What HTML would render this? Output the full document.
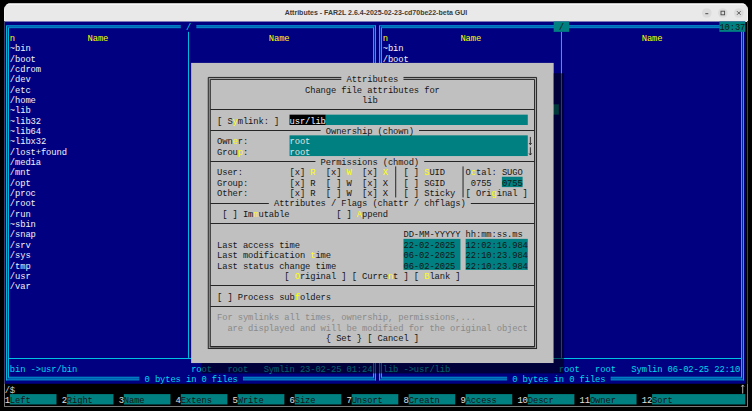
<!DOCTYPE html>
<html><head><meta charset="utf-8"><style>
html,body{margin:0;padding:0;background:#000;width:752px;height:411px;overflow:hidden}
#win{position:absolute;left:4px;top:3px;width:744px;height:404px;background:#000;border-radius:7px 7px 0 0;overflow:hidden}
#title{position:absolute;left:0;top:0;width:744px;height:18px;background:#e9e9e9;border-top:1px solid #c4c4c4;box-shadow:inset 0 1px 0 #f6f6f6,inset 1px 0 0 #f2f2f2,inset -1px 0 0 #f2f2f2,inset 0 -1px 0 #f2f2ea}
#tt{position:absolute;left:0;top:0;width:744px;text-align:center;font:bold 7.6px "Liberation Sans",sans-serif;color:#3c3c3c;line-height:18px;transform:scaleX(0.923);transform-origin:372px 0}
svg{position:absolute;left:0;top:0}
svg text{font-family:"Liberation Mono",monospace;font-size:9.6px;white-space:pre}
</style></head><body>
<div id="win"><div id="title"><div id="tt">Attributes - FAR2L 2.6.4-2025-02-23-cd70be22-beta GUI</div></div></div>
<svg width="752" height="411" viewBox="0 0 752 411">
<rect x="4" y="406" width="744" height="1" fill="#7a7a7a"/>
<rect x="4" y="21" width="1" height="363" fill="#5a5a6a"/>
<rect x="4" y="384" width="1" height="23" fill="#7a7a7a"/>
<rect x="747" y="21" width="1" height="363" fill="#444"/>
<rect x="747" y="384" width="1" height="23" fill="#7a7a7a"/>
<circle cx="706.8" cy="13" r="4.8" fill="#dcdcdc"/>
<circle cx="722.8" cy="13" r="4.8" fill="#dcdcdc"/>
<circle cx="738.8" cy="13" r="4.8" fill="#dcdcdc"/>
<rect x="705.3" y="13.2" width="3" height="1" fill="#4a4a4a"/>
<rect x="721" y="11.2" width="3.6" height="3.6" fill="none" stroke="#4a4a4a" stroke-width="0.9"/>
<path d="M737 11.2 L740.6 14.8 M740.6 11.2 L737 14.8" stroke="#4a4a4a" stroke-width="0.9"/>
<rect x="4.7" y="21.5" width="740.6" height="362.25" fill="#000080"/>
<rect x="6.29" y="25.68" width="369.71" height="2" fill="#0060b0"/>
<rect x="6.29" y="377.22" width="369.71" height="2.7" fill="#0060b0"/>
<rect x="6.29" y="25.68" width="2" height="353.9" fill="#0028a0"/>
<rect x="374" y="25.68" width="2" height="353.9" fill="#0028a0"/>
<rect x="6.29" y="25.18" width="369.71" height="1" fill="#0090cc"/>
<rect x="6.29" y="379.43" width="369.71" height="1" fill="#0090cc"/>
<rect x="6" y="25.68" width="1" height="354.75" fill="#00b4e0"/>
<rect x="375" y="25.68" width="1" height="354.75" fill="#00b4e0"/>
<rect x="8.29" y="27.18" width="365.71" height="1" fill="#0090cc"/>
<rect x="8.29" y="376.72" width="365.71" height="1" fill="#0090cc"/>
<rect x="8" y="27.68" width="1" height="350.05" fill="#00b4e0"/>
<rect x="373" y="27.68" width="1" height="350.05" fill="#00b4e0"/>
<rect x="8.29" y="358" width="365.71" height="1" fill="#00c2e4"/>
<rect x="379.18" y="25.68" width="364.53" height="2" fill="#0060b0"/>
<rect x="379.18" y="377.22" width="364.53" height="2.7" fill="#0060b0"/>
<rect x="379.18" y="25.68" width="2" height="353.9" fill="#0028a0"/>
<rect x="741.71" y="25.68" width="2" height="353.9" fill="#0028a0"/>
<rect x="379.18" y="25.18" width="364.53" height="1" fill="#0090cc"/>
<rect x="379.18" y="379.43" width="364.53" height="1" fill="#0090cc"/>
<rect x="379" y="25.68" width="1" height="354.75" fill="#00b4e0"/>
<rect x="743" y="25.68" width="1" height="354.75" fill="#00b4e0"/>
<rect x="381.18" y="27.18" width="360.53" height="1" fill="#0090cc"/>
<rect x="381.18" y="376.72" width="360.53" height="1" fill="#0090cc"/>
<rect x="381" y="27.68" width="1" height="350.05" fill="#00b4e0"/>
<rect x="741" y="27.68" width="1" height="350.05" fill="#00b4e0"/>
<rect x="381.18" y="358" width="360.53" height="1" fill="#00c2e4"/>
<rect x="188.05" y="31.85" width="1" height="326.02" fill="#00c2e4"/>
<rect x="560.94" y="31.85" width="1" height="326.02" fill="#00c2e4"/>
<rect x="180.79" y="23" width="15.54" height="7.35" fill="#000080"/>
<rect x="553.67" y="21.5" width="15.54" height="10.35" fill="#008080"/>
<rect x="719.4" y="21.5" width="25.9" height="10.35" fill="#008080"/>
<rect x="139.35" y="374.9" width="103.58" height="7.35" fill="#000080"/>
<rect x="507.06" y="374.9" width="103.58" height="7.35" fill="#000080"/>
<rect x="382.77" y="104.3" width="176.09" height="10.35" fill="#008080"/>
<path d="M742.71 393.55 V384.95 M741.41 386.55 L742.71 384.95 L744.01 386.55" stroke="#c8c8c8" stroke-width="0.9" fill="none"/>
<rect x="9.88" y="394.1" width="46.61" height="10.35" fill="#008080"/>
<rect x="66.85" y="394.1" width="46.61" height="10.35" fill="#008080"/>
<rect x="123.82" y="394.1" width="46.61" height="10.35" fill="#008080"/>
<rect x="180.79" y="394.1" width="46.61" height="10.35" fill="#008080"/>
<rect x="237.75" y="394.1" width="46.61" height="10.35" fill="#008080"/>
<rect x="294.72" y="394.1" width="46.61" height="10.35" fill="#008080"/>
<rect x="351.69" y="394.1" width="46.61" height="10.35" fill="#008080"/>
<rect x="408.66" y="394.1" width="46.61" height="10.35" fill="#008080"/>
<rect x="465.63" y="394.1" width="46.61" height="10.35" fill="#008080"/>
<rect x="527.78" y="394.1" width="46.61" height="10.35" fill="#008080"/>
<rect x="589.93" y="394.1" width="46.61" height="10.35" fill="#008080"/>
<rect x="652.08" y="394.1" width="93.22" height="10.35" fill="#008080"/>
<text transform="scale(0.92,1)" x="202.14" y="30.5" fill="#00d8ec">/</text>
<text transform="scale(0.92,1)" x="607.45" y="30.5" fill="#161616">/</text>
<text transform="scale(0.92,1)" x="781.96 787.59 793.22 798.85 804.48" y="30.5" fill="#161616">10:37</text>
<text transform="scale(0.92,1)" x="157.1 168.36 173.99 179.62 185.25 190.88 202.14 207.77 219.02 230.28 235.91 241.54 247.17 252.8" y="382.4" fill="#00d8ec">0bytesin0files</text>
<text transform="scale(0.92,1)" x="556.78 568.04 573.67 579.3 584.93 590.56 601.82 607.45 618.71 629.97 635.6 641.23 646.85 652.48" y="382.4" fill="#00d8ec">0bytesin0files</text>
<text transform="scale(0.92,1)" x="10.74" y="40.85" fill="#ffff00">n</text>
<text transform="scale(0.92,1)" x="416.05" y="40.85" fill="#ffff00">n</text>
<text transform="scale(0.92,1)" x="95.18 100.81 106.44 112.07" y="40.85" fill="#ffff00">Name</text>
<text transform="scale(0.92,1)" x="292.21 297.83 303.46 309.09" y="40.85" fill="#ffff00">Name</text>
<text transform="scale(0.92,1)" x="500.49 506.12 511.75 517.38" y="40.85" fill="#ffff00">Name</text>
<text transform="scale(0.92,1)" x="697.52 703.15 708.78 714.41" y="40.85" fill="#ffff00">Name</text>
<text transform="scale(0.92,1)" x="10.74 16.37 22 27.63" y="51.2" fill="#f2f2fa">~bin</text>
<text transform="scale(0.92,1)" x="10.74 16.37 22 27.63 33.26" y="61.55" fill="#f2f2fa">/boot</text>
<text transform="scale(0.92,1)" x="10.74 16.37 22 27.63 33.26 38.88" y="71.9" fill="#f2f2fa">/cdrom</text>
<text transform="scale(0.92,1)" x="10.74 16.37 22 27.63" y="82.25" fill="#f2f2fa">/dev</text>
<text transform="scale(0.92,1)" x="10.74 16.37 22 27.63" y="92.6" fill="#f2f2fa">/etc</text>
<text transform="scale(0.92,1)" x="10.74 16.37 22 27.63 33.26" y="102.95" fill="#f2f2fa">/home</text>
<text transform="scale(0.92,1)" x="10.74 16.37 22 27.63" y="113.3" fill="#f2f2fa">~lib</text>
<text transform="scale(0.92,1)" x="10.74 16.37 22 27.63 33.26 38.88" y="123.65" fill="#f2f2fa">~lib32</text>
<text transform="scale(0.92,1)" x="10.74 16.37 22 27.63 33.26 38.88" y="134" fill="#f2f2fa">~lib64</text>
<text transform="scale(0.92,1)" x="10.74 16.37 22 27.63 33.26 38.88 44.51" y="144.35" fill="#f2f2fa">~libx32</text>
<text transform="scale(0.92,1)" x="10.74 16.37 22 27.63 33.26 38.88 44.51 50.14 55.77 61.4 67.03" y="154.7" fill="#f2f2fa">/lost+found</text>
<text transform="scale(0.92,1)" x="10.74 16.37 22 27.63 33.26 38.88" y="165.05" fill="#f2f2fa">/media</text>
<text transform="scale(0.92,1)" x="10.74 16.37 22 27.63" y="175.4" fill="#f2f2fa">/mnt</text>
<text transform="scale(0.92,1)" x="10.74 16.37 22 27.63" y="185.75" fill="#f2f2fa">/opt</text>
<text transform="scale(0.92,1)" x="10.74 16.37 22 27.63 33.26" y="196.1" fill="#f2f2fa">/proc</text>
<text transform="scale(0.92,1)" x="10.74 16.37 22 27.63 33.26" y="206.45" fill="#f2f2fa">/root</text>
<text transform="scale(0.92,1)" x="10.74 16.37 22 27.63" y="216.8" fill="#f2f2fa">/run</text>
<text transform="scale(0.92,1)" x="10.74 16.37 22 27.63 33.26" y="227.15" fill="#f2f2fa">~sbin</text>
<text transform="scale(0.92,1)" x="10.74 16.37 22 27.63 33.26" y="237.5" fill="#f2f2fa">/snap</text>
<text transform="scale(0.92,1)" x="10.74 16.37 22 27.63" y="247.85" fill="#f2f2fa">/srv</text>
<text transform="scale(0.92,1)" x="10.74 16.37 22 27.63" y="258.2" fill="#f2f2fa">/sys</text>
<text transform="scale(0.92,1)" x="10.74 16.37 22 27.63" y="268.55" fill="#f2f2fa">/tmp</text>
<text transform="scale(0.92,1)" x="10.74 16.37 22 27.63" y="278.9" fill="#f2f2fa">/usr</text>
<text transform="scale(0.92,1)" x="10.74 16.37 22 27.63" y="289.25" fill="#f2f2fa">/var</text>
<text transform="scale(0.92,1)" x="416.05 421.68 427.31 432.94" y="51.2" fill="#f2f2fa">~bin</text>
<text transform="scale(0.92,1)" x="416.05 421.68 427.31 432.94 438.57" y="61.55" fill="#f2f2fa">/boot</text>
<text transform="scale(0.92,1)" x="10.74 16.37 22 33.26 38.88 44.51 50.14 55.77 61.4 67.03 72.66 78.29" y="372.05" fill="#00d8ec">bin-&gt;usr/bin</text>
<text transform="scale(0.92,1)" x="207.77 213.39 219.02 224.65 247.17 252.8 258.43 264.06 286.58 292.21 297.83 303.46 309.09 314.72 325.98 331.61 337.24 342.87 348.5 354.13 359.76 365.39 376.65 382.27 387.9 393.53 399.16" y="372.05" fill="#00d8ec">rootrootSymlin23-02-2501:24</text>
<text transform="scale(0.92,1)" x="416.05 421.68 427.31 438.57 444.2 449.83 455.46 461.09 466.72 472.34 477.97 483.6" y="372.05" fill="#00d8ec">lib-&gt;usr/lib</text>
<text transform="scale(0.92,1)" x="607.45 613.08 618.71 624.34 646.85 652.48 658.11 663.74 686.26 691.89 697.52 703.15 708.78 714.41 725.67 731.29 736.92 742.55 748.18 753.81 759.44 765.07 776.33 781.96 787.59 793.22 798.85" y="372.05" fill="#00d8ec">rootrootSymlin06-02-2522:10</text>
<text transform="scale(0.92,1)" x="5.11 10.74" y="392.75" fill="#d0d0d0">/$</text>
<text transform="scale(0.92,1)" x="5.11" y="403.1" fill="#e0e0e0">1</text>
<text transform="scale(0.92,1)" x="10.74 16.37 22 27.63" y="403.1" fill="#161616">Left</text>
<text transform="scale(0.92,1)" x="67.03" y="403.1" fill="#e0e0e0">2</text>
<text transform="scale(0.92,1)" x="72.66 78.29 83.92 89.55 95.18" y="403.1" fill="#161616">Right</text>
<text transform="scale(0.92,1)" x="128.95" y="403.1" fill="#e0e0e0">3</text>
<text transform="scale(0.92,1)" x="134.58 140.21 145.84 151.47" y="403.1" fill="#161616">Name</text>
<text transform="scale(0.92,1)" x="190.88" y="403.1" fill="#e0e0e0">4</text>
<text transform="scale(0.92,1)" x="196.51 202.14 207.77 213.39 219.02 224.65" y="403.1" fill="#161616">Extens</text>
<text transform="scale(0.92,1)" x="252.8" y="403.1" fill="#e0e0e0">5</text>
<text transform="scale(0.92,1)" x="258.43 264.06 269.69 275.32 280.95" y="403.1" fill="#161616">Write</text>
<text transform="scale(0.92,1)" x="314.72" y="403.1" fill="#e0e0e0">6</text>
<text transform="scale(0.92,1)" x="320.35 325.98 331.61 337.24" y="403.1" fill="#161616">Size</text>
<text transform="scale(0.92,1)" x="376.65" y="403.1" fill="#e0e0e0">7</text>
<text transform="scale(0.92,1)" x="382.27 387.9 393.53 399.16 404.79 410.42" y="403.1" fill="#161616">Unsort</text>
<text transform="scale(0.92,1)" x="438.57" y="403.1" fill="#e0e0e0">8</text>
<text transform="scale(0.92,1)" x="444.2 449.83 455.46 461.09 466.72 472.34" y="403.1" fill="#161616">Creatn</text>
<text transform="scale(0.92,1)" x="500.49" y="403.1" fill="#e0e0e0">9</text>
<text transform="scale(0.92,1)" x="506.12 511.75 517.38 523.01 528.64 534.27" y="403.1" fill="#161616">Access</text>
<text transform="scale(0.92,1)" x="562.41 568.04" y="403.1" fill="#e0e0e0">10</text>
<text transform="scale(0.92,1)" x="573.67 579.3 584.93 590.56 596.19" y="403.1" fill="#161616">Descr</text>
<text transform="scale(0.92,1)" x="629.97 635.6" y="403.1" fill="#e0e0e0">11</text>
<text transform="scale(0.92,1)" x="641.23 646.85 652.48 658.11 663.74" y="403.1" fill="#161616">Owner</text>
<text transform="scale(0.92,1)" x="697.52 703.15" y="403.1" fill="#e0e0e0">12</text>
<text transform="scale(0.92,1)" x="708.78 714.41 720.04 725.67" y="403.1" fill="#161616">Sort</text>
<rect x="191.14" y="62.9" width="362.53" height="300.15" fill="#c0c0c0"/>
<rect x="208.27" y="77.42" width="328.28" height="2" fill="#a8a8a8"/>
<rect x="208.27" y="346.52" width="328.28" height="2" fill="#707070"/>
<rect x="208.27" y="77.42" width="2" height="271.1" fill="#a0a0a0"/>
<rect x="534.55" y="77.42" width="2" height="271.1" fill="#a8a8a8"/>
<rect x="208.27" y="76.92" width="328.28" height="1" fill="#262626"/>
<rect x="208.27" y="348.02" width="328.28" height="1" fill="#262626"/>
<rect x="207.77" y="77.42" width="1" height="271.6" fill="#262626"/>
<rect x="536.05" y="77.42" width="1" height="271.6" fill="#262626"/>
<rect x="210.27" y="78.92" width="324.28" height="1" fill="#262626"/>
<rect x="210.27" y="346.02" width="324.28" height="1" fill="#262626"/>
<rect x="209.77" y="79.42" width="1" height="267.6" fill="#262626"/>
<rect x="534.05" y="79.42" width="1" height="267.6" fill="#262626"/>
<rect x="210.27" y="109" width="324.28" height="1" fill="#262626"/>
<rect x="210.27" y="130" width="324.28" height="1" fill="#262626"/>
<rect x="210.27" y="161" width="324.28" height="1" fill="#262626"/>
<rect x="210.27" y="203" width="324.28" height="1" fill="#262626"/>
<rect x="210.27" y="223" width="324.28" height="1" fill="#262626"/>
<rect x="210.27" y="285" width="324.28" height="1" fill="#262626"/>
<rect x="210.27" y="306" width="324.28" height="1" fill="#262626"/>
<rect x="395.21" y="166.4" width="1" height="31.05" fill="#262626"/>
<rect x="462.54" y="166.4" width="1" height="31.05" fill="#262626"/>
<rect x="341.33" y="74.75" width="62.15" height="7.35" fill="#c0c0c0"/>
<rect x="320.62" y="126.5" width="98.4" height="7.35" fill="#c0c0c0"/>
<rect x="315.44" y="157.55" width="108.76" height="7.35" fill="#c0c0c0"/>
<rect x="268.83" y="198.95" width="201.98" height="7.35" fill="#c0c0c0"/>
<rect x="289.55" y="114.65" width="36.25" height="10.35" fill="#000000"/>
<rect x="325.8" y="114.65" width="201.98" height="10.35" fill="#008080"/>
<rect x="289.55" y="135.35" width="238.23" height="20.7" fill="#008080"/>
<path d="M530.37 136.95 V144.65 M529.07 143.05 L530.37 144.65 L531.67 143.05" stroke="#202020" stroke-width="0.9" fill="none"/>
<path d="M530.37 147.3 V155 M529.07 153.4 L530.37 155 L531.67 153.4" stroke="#202020" stroke-width="0.9" fill="none"/>
<rect x="501.88" y="176.75" width="20.72" height="10.35" fill="#008080"/>
<rect x="403.48" y="238.85" width="56.97" height="31.05" fill="#008080"/>
<rect x="465.63" y="238.85" width="62.15" height="31.05" fill="#008080"/>
<text transform="scale(0.92,1)" x="376.65 382.27 387.9 393.53 399.16 404.79 410.42 416.05 421.68 427.31" y="82.25" fill="#161616">Attributes</text>
<text transform="scale(0.92,1)" x="354.13 359.76 365.39 371.02 376.65 382.27 387.9 393.53 399.16 410.42 416.05 421.68 427.31 432.94 438.57 444.2" y="134" fill="#161616">Ownership(chown)</text>
<text transform="scale(0.92,1)" x="348.5 354.13 359.76 365.39 371.02 376.65 382.27 387.9 393.53 399.16 404.79 416.05 421.68 427.31 432.94 438.57 444.2 449.83" y="165.05" fill="#161616">Permissions(chmod)</text>
<text transform="scale(0.92,1)" x="297.83 303.46 309.09 314.72 320.35 325.98 331.61 337.24 342.87 348.5 359.76 371.02 376.65 382.27 387.9 393.53 404.79 410.42 416.05 421.68 427.31 432.94 438.57 449.83 461.09 466.72 472.34 477.97 483.6 489.23 494.86 500.49" y="206.45" fill="#161616">Attributes/Flags(chattr/chflags)</text>
<text transform="scale(0.92,1)" x="331.61 337.24 342.87 348.5 354.13 359.76 371.02 376.65 382.27 387.9 399.16 404.79 410.42 416.05 421.68 427.31 432.94 438.57 444.2 449.83 461.09 466.72 472.34" y="92.6" fill="#161616">Changefileattributesfor</text>
<text transform="scale(0.92,1)" x="393.53 399.16 404.79" y="102.95" fill="#161616">lib</text>
<text transform="scale(0.92,1)" x="235.91 247.17" y="123.65" fill="#161616">[S</text>
<text transform="scale(0.92,1)" x="252.8" y="123.65" fill="#ffff00">y</text>
<text transform="scale(0.92,1)" x="258.43 264.06 269.69 275.32 280.95 286.58 297.83" y="123.65" fill="#161616">mlink:]</text>
<text transform="scale(0.92,1)" x="314.72 320.35 325.98 331.61 337.24 342.87 348.5" y="123.65" fill="#f2f2fa">usr/lib</text>
<text transform="scale(0.92,1)" x="235.91 241.54 247.17" y="144.35" fill="#161616">Own</text>
<text transform="scale(0.92,1)" x="252.8" y="144.35" fill="#ffff00">e</text>
<text transform="scale(0.92,1)" x="258.43 264.06" y="144.35" fill="#161616">r:</text>
<text transform="scale(0.92,1)" x="235.91 241.54 247.17 252.8" y="154.7" fill="#161616">Grou</text>
<text transform="scale(0.92,1)" x="258.43" y="154.7" fill="#ffff00">p</text>
<text transform="scale(0.92,1)" x="264.06" y="154.7" fill="#161616">:</text>
<text transform="scale(0.92,1)" x="314.72 320.35 325.98 331.61" y="144.35" fill="#e0e0e0">root</text>
<text transform="scale(0.92,1)" x="314.72 320.35 325.98 331.61" y="154.7" fill="#e0e0e0">root</text>
<text transform="scale(0.92,1)" x="235.91 241.54 247.17 252.8 258.43" y="175.4" fill="#161616">User:</text>
<text transform="scale(0.92,1)" x="235.91 241.54 247.17 252.8 258.43 264.06" y="185.75" fill="#161616">Group:</text>
<text transform="scale(0.92,1)" x="235.91 241.54 247.17 252.8 258.43 264.06" y="196.1" fill="#161616">Other:</text>
<text transform="scale(0.92,1)" x="314.72 320.35 325.98" y="175.4" fill="#161616">[x]</text>
<text transform="scale(0.92,1)" x="337.24" y="175.4" fill="#ffff00">R</text>
<text transform="scale(0.92,1)" x="354.13 359.76 365.39" y="175.4" fill="#161616">[x]</text>
<text transform="scale(0.92,1)" x="376.65" y="175.4" fill="#ffff00">W</text>
<text transform="scale(0.92,1)" x="393.53 399.16 404.79" y="175.4" fill="#161616">[x]</text>
<text transform="scale(0.92,1)" x="416.05" y="175.4" fill="#ffff00">X</text>
<text transform="scale(0.92,1)" x="314.72 320.35 325.98 337.24" y="185.75" fill="#161616">[x]R</text>
<text transform="scale(0.92,1)" x="354.13 365.39 376.65" y="185.75" fill="#161616">[]W</text>
<text transform="scale(0.92,1)" x="393.53 399.16 404.79 416.05" y="185.75" fill="#161616">[x]X</text>
<text transform="scale(0.92,1)" x="314.72 320.35 325.98 337.24" y="196.1" fill="#161616">[x]R</text>
<text transform="scale(0.92,1)" x="354.13 365.39 376.65" y="196.1" fill="#161616">[]W</text>
<text transform="scale(0.92,1)" x="393.53 399.16 404.79 416.05" y="196.1" fill="#161616">[x]X</text>
<text transform="scale(0.92,1)" x="438.57 449.83" y="175.4" fill="#161616">[]</text>
<text transform="scale(0.92,1)" x="461.09" y="175.4" fill="#ffff00">S</text>
<text transform="scale(0.92,1)" x="466.72 472.34 477.97" y="175.4" fill="#161616">UID</text>
<text transform="scale(0.92,1)" x="438.57 449.83 461.09 466.72 472.34 477.97" y="185.75" fill="#161616">[]SGID</text>
<text transform="scale(0.92,1)" x="438.57 449.83 461.09 466.72 472.34 477.97 483.6 489.23" y="196.1" fill="#161616">[]Sticky</text>
<text transform="scale(0.92,1)" x="506.12" y="175.4" fill="#161616">O</text>
<text transform="scale(0.92,1)" x="511.75" y="175.4" fill="#ffff00">c</text>
<text transform="scale(0.92,1)" x="517.38 523.01 528.64 534.27 545.53 551.16 556.78 562.41" y="175.4" fill="#161616">tal:SUGO</text>
<text transform="scale(0.92,1)" x="511.75 517.38 523.01 528.64" y="185.75" fill="#161616">0755</text>
<text transform="scale(0.92,1)" x="545.53 551.16 556.78 562.41" y="185.75" fill="#161616">0755</text>
<text transform="scale(0.92,1)" x="506.12 517.38 523.01 528.64" y="196.1" fill="#161616">[Ori</text>
<text transform="scale(0.92,1)" x="534.27" y="196.1" fill="#ffff00">g</text>
<text transform="scale(0.92,1)" x="539.9 545.53 551.16 556.78 568.04" y="196.1" fill="#161616">inal]</text>
<text transform="scale(0.92,1)" x="241.54 252.8 264.06 269.69" y="216.8" fill="#161616">[]Im</text>
<text transform="scale(0.92,1)" x="275.32" y="216.8" fill="#ffff00">m</text>
<text transform="scale(0.92,1)" x="280.95 286.58 292.21 297.83 303.46 309.09" y="216.8" fill="#161616">utable</text>
<text transform="scale(0.92,1)" x="365.39 376.65" y="216.8" fill="#161616">[]</text>
<text transform="scale(0.92,1)" x="387.9" y="216.8" fill="#ffff00">A</text>
<text transform="scale(0.92,1)" x="393.53 399.16 404.79 410.42 416.05" y="216.8" fill="#161616">ppend</text>
<text transform="scale(0.92,1)" x="438.57 444.2 449.83 455.46 461.09 466.72 472.34 477.97 483.6 489.23 494.86 506.12 511.75 517.38 523.01 528.64 534.27 539.9 545.53 551.16 556.78 562.41" y="237.5" fill="#161616">DD-MM-YYYYYhh:mm:ss.ms</text>
<text transform="scale(0.92,1)" x="235.91 241.54 247.17 252.8 264.06 269.69 275.32 280.95 286.58 292.21 303.46 309.09 314.72 320.35" y="247.85" fill="#161616">Lastaccesstime</text>
<text transform="scale(0.92,1)" x="235.91 241.54 247.17 252.8 264.06 269.69 275.32 280.95 286.58 292.21 297.83 303.46 309.09 314.72 320.35 325.98" y="258.2" fill="#161616">Lastmodification</text>
<text transform="scale(0.92,1)" x="337.24" y="258.2" fill="#ffff00">t</text>
<text transform="scale(0.92,1)" x="342.87 348.5 354.13" y="258.2" fill="#161616">ime</text>
<text transform="scale(0.92,1)" x="235.91 241.54 247.17 252.8 264.06 269.69 275.32 280.95 286.58 292.21 303.46 309.09 314.72 320.35 325.98 331.61 342.87 348.5 354.13 359.76" y="268.55" fill="#161616">Laststatuschangetime</text>
<text transform="scale(0.92,1)" x="438.57 444.2 449.83 455.46 461.09 466.72 472.34 477.97 483.6 489.23" y="247.85" fill="#161616">22-02-2025</text>
<text transform="scale(0.92,1)" x="506.12 511.75 517.38 523.01 528.64 534.27 539.9 545.53 551.16 556.78 562.41 568.04" y="247.85" fill="#161616">12:02:16.984</text>
<text transform="scale(0.92,1)" x="438.57 444.2 449.83 455.46 461.09 466.72 472.34 477.97 483.6 489.23" y="258.2" fill="#161616">06-02-2025</text>
<text transform="scale(0.92,1)" x="506.12 511.75 517.38 523.01 528.64 534.27 539.9 545.53 551.16 556.78 562.41 568.04" y="258.2" fill="#161616">22:10:23.984</text>
<text transform="scale(0.92,1)" x="438.57 444.2 449.83 455.46 461.09 466.72 472.34 477.97 483.6 489.23" y="268.55" fill="#161616">06-02-2025</text>
<text transform="scale(0.92,1)" x="506.12 511.75 517.38 523.01 528.64 534.27 539.9 545.53 551.16 556.78 562.41 568.04" y="268.55" fill="#161616">22:10:23.984</text>
<text transform="scale(0.92,1)" x="309.09" y="278.9" fill="#161616">[</text>
<text transform="scale(0.92,1)" x="320.35" y="278.9" fill="#ffff00">O</text>
<text transform="scale(0.92,1)" x="325.98 331.61 337.24 342.87 348.5 354.13 359.76 371.02" y="278.9" fill="#161616">riginal]</text>
<text transform="scale(0.92,1)" x="382.27 393.53 399.16 404.79 410.42 416.05" y="278.9" fill="#161616">[Curre</text>
<text transform="scale(0.92,1)" x="421.68" y="278.9" fill="#ffff00">n</text>
<text transform="scale(0.92,1)" x="427.31 438.57" y="278.9" fill="#161616">t]</text>
<text transform="scale(0.92,1)" x="449.83" y="278.9" fill="#161616">[</text>
<text transform="scale(0.92,1)" x="461.09" y="278.9" fill="#ffff00">B</text>
<text transform="scale(0.92,1)" x="466.72 472.34 477.97 483.6 494.86" y="278.9" fill="#161616">lank]</text>
<text transform="scale(0.92,1)" x="235.91 247.17 258.43 264.06 269.69 275.32 280.95 286.58 292.21 303.46 309.09 314.72" y="299.6" fill="#161616">[]Processsub</text>
<text transform="scale(0.92,1)" x="320.35" y="299.6" fill="#ffff00">f</text>
<text transform="scale(0.92,1)" x="325.98 331.61 337.24 342.87 348.5 354.13" y="299.6" fill="#161616">olders</text>
<text transform="scale(0.92,1)" x="235.91 241.54 247.17 258.43 264.06 269.69 275.32 280.95 286.58 292.21 297.83 309.09 314.72 320.35 331.61 337.24 342.87 348.5 354.13 359.76 371.02 376.65 382.27 387.9 393.53 399.16 404.79 410.42 416.05 421.68 432.94 438.57 444.2 449.83 455.46 461.09 466.72 472.34 477.97 483.6 489.23 494.86 500.49 506.12 511.75" y="320.3" fill="#8a8a8a">Forsymlinksalltimes,ownership,permissions,...</text>
<text transform="scale(0.92,1)" x="247.17 252.8 258.43 269.69 275.32 280.95 286.58 292.21 297.83 303.46 309.09 314.72 325.98 331.61 337.24 348.5 354.13 359.76 365.39 376.65 382.27 393.53 399.16 404.79 410.42 416.05 421.68 427.31 432.94 444.2 449.83 455.46 466.72 472.34 477.97 489.23 494.86 500.49 506.12 511.75 517.38 523.01 528.64 539.9 545.53 551.16 556.78 562.41 568.04" y="330.65" fill="#8a8a8a">aredisplayedandwillbemodifiedfortheoriginalobject</text>
<text transform="scale(0.92,1)" x="354.13 365.39 371.02 376.65 387.9 399.16 410.42 416.05 421.68 427.31 432.94 438.57 449.83" y="341" fill="#161616">{Set}[Cancel]</text>
<rect x="553.67" y="73.25" width="10.36" height="300.15" fill="rgba(0,0,0,0.55)"/>
<rect x="201.5" y="363.05" width="352.17" height="10.35" fill="rgba(0,0,0,0.55)"/>
</svg>
</body></html>
